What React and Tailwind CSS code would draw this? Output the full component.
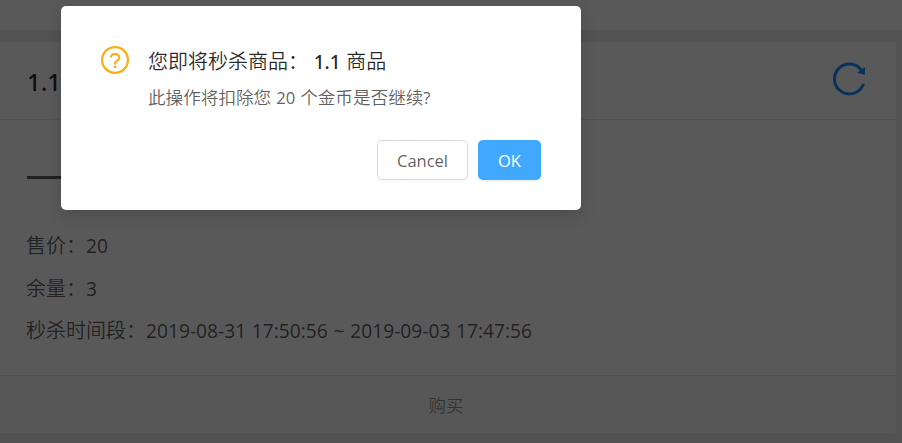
import { AiOutlineReload } from "react-icons/ai";

const Latin = ({ className = "text-[0.945em]", children }) => (
  <span className={`font-['Open_Sans'] font-normal [word-spacing:0.04em] ${className}`}>{children}</span>
);

function QuestionIcon({ className }) {
  return (
    <svg viewBox="0 0 28 28" fill="none" stroke="currentColor" className={className}>
      <circle cx="14" cy="14" r="12.9" strokeWidth="2.2" />
      <path d="M9.9 11.6c0-2.2 1.7-3.7 4.1-3.7s4.3 1.5 4.3 3.7c0 1.7-1 2.7-2.5 3.4-1.2.6-1.7 1.2-1.7 2.3v1.1" strokeWidth="2" />
      <path d="M12.9 20.8h2.4" strokeWidth="2.4" />
    </svg>
  );
}

function Row({ label, value }) {
  return (
    <p className="h-[42.6px] whitespace-pre text-[20px] leading-[42px]">
      {label}：<Latin className="text-[19.2px]">{value}</Latin>
    </p>
  );
}

function ProductCard() {
  return (
    <section className="mr-[6px] flex h-[391px] flex-col overflow-hidden rounded-r-[2px] bg-white">
      <header className="flex h-[78px] shrink-0 items-center justify-between border-b border-[#e8e8e8] pr-[27px] pl-[27px]">
        <h2 className="text-[25px] font-medium text-black/85">
          <span className="font-['Noto_Sans'] text-[24px] font-medium">1.1</span> 商品
        </h2>
        <AiOutlineReload className="mt-[-3px] size-[40px] text-[#1890ff]" />
      </header>
      <div className="flex-1 pt-[56px] pl-[26px] text-black/65">
        <div className="mb-[45px] ml-px h-[3px] w-[160px] bg-[#606060]" />
        <Row label="售价" value="20" />
        <Row label="余量" value="3" />
        <Row label="秒杀时间段" value="2019-08-31 17:50:56 ~ 2019-09-03 17:47:56" />
      </div>
      <footer className="flex h-[58px] shrink-0 items-center justify-center border-t border-[#e8e8e8] bg-[#fafafa] pt-px pr-[4px] text-[17.5px] text-black/45">
        购买
      </footer>
    </section>
  );
}

function ConfirmDialog() {
  return (
    <div
      role="dialog"
      className="ml-[61px] mt-[6px] flex h-[204px] w-[520px] flex-col rounded-[5px] bg-white pt-[38px] pr-[40px] pb-[30px] pl-[40px] shadow-[0_5px_15px_rgba(0,0,0,0.15)]"
    >
      <div className="flex">
        <QuestionIcon className="mt-[2px] size-[28px] shrink-0 text-[#faad14]" />
        <div className="ml-[19px] whitespace-pre">
          <h1 className="h-[35px] text-[20px] leading-[34px] text-black/85">
            您即将秒杀商品：<span className="font-['Noto_Sans'] text-[19px] font-medium [word-spacing:0.04em]"> 1.1 </span>商品
          </h1>
          <p className="h-[36px] text-[17.6px] leading-[36px] text-black/65">
            此操作将扣除您<Latin> 20 </Latin>个金币是否继续<Latin>?</Latin>
          </p>
        </div>
      </div>
      <div className="mt-auto flex justify-end gap-[10px] font-['Open_Sans'] text-[16.5px] font-normal">
        <button className="h-[40px] w-[91px] rounded-[5px] border border-[#d9d9d9] bg-white pt-[2px] text-black/65 shadow-[0_2px_0_rgba(0,0,0,0.015)]">
          Cancel
        </button>
        <button className="h-[40px] w-[63px] rounded-[5px] bg-[#40a9ff] pt-[2px] text-white shadow-[0_2px_0_rgba(0,0,0,0.045)]">
          OK
        </button>
      </div>
    </div>
  );
}

export default function App() {
  return (
    <div className="relative h-[443px] w-[902px] overflow-hidden bg-[#ececec] font-['Noto_Sans_CJK_SC',sans-serif] font-[350]">
      <div className="mb-[12px] h-[30px] bg-white" />
      <ProductCard />
      <div className="absolute inset-0 bg-black/65">
        <ConfirmDialog />
      </div>
    </div>
  );
}
